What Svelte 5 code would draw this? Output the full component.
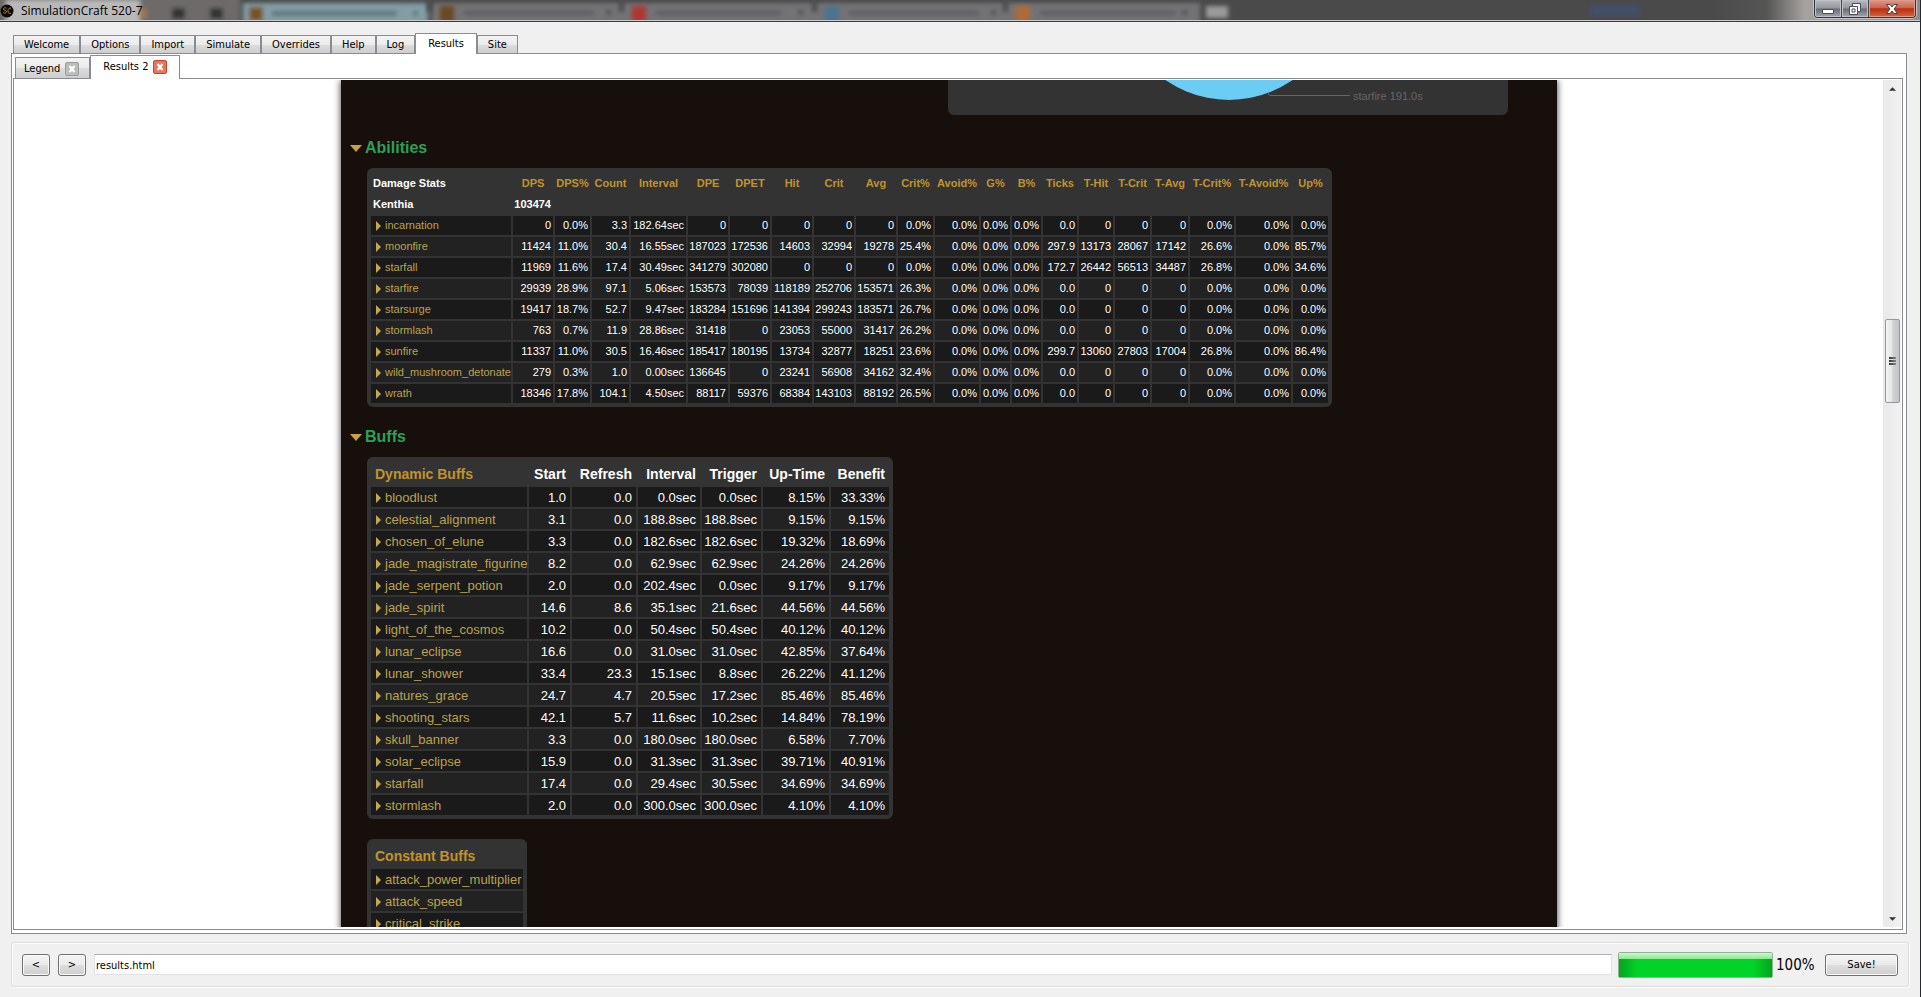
<script lang="ts">
    const tabs = ["Welcome", "Options", "Import", "Simulate", "Overrides", "Help", "Log", "Results", "Site"];
    const reports = ["Legend", "Results 2"];

    let activeTab = $state("Results");
    let activeReport = $state("Results 2");
    let address = $state("results.html");
    let progress = $state(100);

    const ghostTabs = [
        { x: 430, icon: "#6b4a22", text: 130 },
        { x: 622, icon: "#b03430", text: 125 },
        { x: 815, icon: "#4a7390", text: 130 },
        { x: 1006, icon: "#b06a34", text: 135 },
    ];

    const abilityCols: [string, number][] = [
        ["DPS", 40],
        ["DPS%", 35],
        ["Count", 37],
        ["Interval", 55],
        ["DPE", 40],
        ["DPET", 40],
        ["Hit", 40],
        ["Crit", 40],
        ["Avg", 40],
        ["Crit%", 35],
        ["Avoid%", 44],
        ["G%", 29],
        ["B%", 29],
        ["Ticks", 34],
        ["T-Hit", 34],
        ["T-Crit", 35],
        ["T-Avg", 36],
        ["T-Crit%", 44],
        ["T-Avoid%", 55],
        ["Up%", 35],
    ];

    const abilities = [
        "incarnation 0 0.0% 3.3 182.64sec 0 0 0 0 0 0.0% 0.0% 0.0% 0.0% 0.0 0 0 0 0.0% 0.0% 0.0%",
        "moonfire 11424 11.0% 30.4 16.55sec 187023 172536 14603 32994 19278 25.4% 0.0% 0.0% 0.0% 297.9 13173 28067 17142 26.6% 0.0% 85.7%",
        "starfall 11969 11.6% 17.4 30.49sec 341279 302080 0 0 0 0.0% 0.0% 0.0% 0.0% 172.7 26442 56513 34487 26.8% 0.0% 34.6%",
        "starfire 29939 28.9% 97.1 5.06sec 153573 78039 118189 252706 153571 26.3% 0.0% 0.0% 0.0% 0.0 0 0 0 0.0% 0.0% 0.0%",
        "starsurge 19417 18.7% 52.7 9.47sec 183284 151696 141394 299243 183571 26.7% 0.0% 0.0% 0.0% 0.0 0 0 0 0.0% 0.0% 0.0%",
        "stormlash 763 0.7% 11.9 28.86sec 31418 0 23053 55000 31417 26.2% 0.0% 0.0% 0.0% 0.0 0 0 0 0.0% 0.0% 0.0%",
        "sunfire 11337 11.0% 30.5 16.46sec 185417 180195 13734 32877 18251 23.6% 0.0% 0.0% 0.0% 299.7 13060 27803 17004 26.8% 0.0% 86.4%",
        "wild_mushroom_detonate 279 0.3% 1.0 0.00sec 136645 0 23241 56908 34162 32.4% 0.0% 0.0% 0.0% 0.0 0 0 0 0.0% 0.0% 0.0%",
        "wrath 18346 17.8% 104.1 4.50sec 88117 59376 68384 143103 88192 26.5% 0.0% 0.0% 0.0% 0.0 0 0 0 0.0% 0.0% 0.0%",
    ].map((row) => row.split(" "));

    const buffCols: [string, number][] = [
        ["Start", 41],
        ["Refresh", 64],
        ["Interval", 62],
        ["Trigger", 59],
        ["Up-Time", 66],
        ["Benefit", 58],
    ];

    const buffs = [
        "bloodlust 1.0 0.0 0.0sec 0.0sec 8.15% 33.33%",
        "celestial_alignment 3.1 0.0 188.8sec 188.8sec 9.15% 9.15%",
        "chosen_of_elune 3.3 0.0 182.6sec 182.6sec 19.32% 18.69%",
        "jade_magistrate_figurine 8.2 0.0 62.9sec 62.9sec 24.26% 24.26%",
        "jade_serpent_potion 2.0 0.0 202.4sec 0.0sec 9.17% 9.17%",
        "jade_spirit 14.6 8.6 35.1sec 21.6sec 44.56% 44.56%",
        "light_of_the_cosmos 10.2 0.0 50.4sec 50.4sec 40.12% 40.12%",
        "lunar_eclipse 16.6 0.0 31.0sec 31.0sec 42.85% 37.64%",
        "lunar_shower 33.4 23.3 15.1sec 8.8sec 26.22% 41.12%",
        "natures_grace 24.7 4.7 20.5sec 17.2sec 85.46% 85.46%",
        "shooting_stars 42.1 5.7 11.6sec 10.2sec 14.84% 78.19%",
        "skull_banner 3.3 0.0 180.0sec 180.0sec 6.58% 7.70%",
        "solar_eclipse 15.9 0.0 31.3sec 31.3sec 39.71% 40.91%",
        "starfall 17.4 0.0 29.4sec 30.5sec 34.69% 34.69%",
        "stormlash 2.0 0.0 300.0sec 300.0sec 4.10% 4.10%",
    ].map((row) => row.split(" "));

    const constantBuffs = ["attack_power_multiplier", "attack_speed", "critical_strike"];
</script>

<div class="window">
    <header class="titlebar">
        <svg class="glass" aria-hidden="true">
            <defs>
                <filter id="soft" x="-20%" y="-50%" width="140%" height="200%">
                    <feGaussianBlur stdDeviation="2" />
                </filter>
            </defs>
            <g filter="url(#soft)">
                <rect x="-10" y="-4" width="250" height="32" fill="#6d6b69" />
                <rect x="243" y="3" width="185" height="26" fill="#829da4" />
                <rect x="432" y="3" width="768" height="26" fill="#737376" />
                <rect x="6" y="0" width="134" height="26" fill="#b9b9b9" />
                <rect x="139" y="8" width="8" height="11" fill="#9a7452" />
                <rect x="172" y="8" width="13" height="11" fill="#363636" />
                <rect x="210" y="8" width="13" height="11" fill="#363636" />
                <rect x="249" y="7" width="14" height="14" fill="#7a5420" />
                <rect x="272" y="11" width="125" height="5" fill="#5d757d" />
                <rect x="413" y="11" width="5" height="5" fill="#5d757d" />
                <rect x="1206" y="6" width="22" height="12" fill="#9a9a9a" />
                <rect x="1590" y="5" width="50" height="11" fill="#434f68" />
            </g>
            {#each ghostTabs as tab}
                <g filter="url(#soft)">
                    <rect x={tab.x - 3} y="0" width="5" height="12" fill="#4b4b4b" />
                    <rect x={tab.x + 10} y="6" width="14" height="16" fill={tab.icon} />
                    <rect x={tab.x + 34} y="11" width={tab.text} height="4" fill="#5d5d60" />
                    <rect x={tab.x + 176} y="10" width="5" height="5" fill="#555558" />
                </g>
            {/each}
        </svg>
        <svg class="logo" viewBox="0 0 14 14" aria-hidden="true">
            <circle cx="7" cy="7" r="6.5" fill="#0d0b07" />
            <path d="M6.5 4.2c-1.4-.8-3.3-.2-3 1.2.3 1.2 2.7.8 2.9 2.2.1 1.4-1.9 1.9-3.2 1.1M11 4.2c-1.7-.6-3.1.9-3.1 2.7 0 1.9 1.4 3.1 3 2.5" fill="none" stroke="#b09430" />
        </svg>
        <span class="title">SimulationCraft 520-7</span>
        <div class="controls">
            <button aria-label="Minimize">
                <svg viewBox="0 0 12 12"><rect x=".5" y="6.5" width="11" height="4" rx=".5" fill="#fff" stroke="#484c5c" /></svg>
            </button>
            <button aria-label="Restore">
                <svg viewBox="0 0 12 12">
                    <path d="M3.5.5h8v8h-3v3h-8v-8h3z" fill="#fff" stroke="#484c5c" />
                    <path d="M3.5 3.5h5v5M3 6h3v3H3z" fill="none" stroke="#484c5c" />
                </svg>
            </button>
            <button class="close" aria-label="Close">
                <svg viewBox="0 0 12 12"><path d="M.5 1.5H4L6 4l2-2.5h3.5L8 6l3.5 4.500H8L6 8l-2 2.500H.5L4 6z" fill="#fff" stroke="#4c3c44" /></svg>
            </button>
        </div>
    </header>

    <main>
        <div class="tabs" role="tablist">
            {#each tabs as tab}
                <button class="tab" role="tab" class:active={tab === activeTab} aria-selected={tab === activeTab} onclick={() => (activeTab = tab)}>
                    {tab}
                </button>
            {/each}
        </div>

        <div class="pane">
            <div class="tabs reports" role="tablist">
                {#each reports as report}
                    <button class="tab" role="tab" class:active={report === activeReport} aria-selected={report === activeReport} onclick={() => (activeReport = report)}>
                        {report}
                        <svg class="tab-close" viewBox="0 0 14 14" aria-hidden="true">
                            <rect class="plate" x=".5" y=".5" width="13" height="13" rx="1.5" />
                            <path d="M4.5 4l5 6M9.5 4l-5 6" stroke="#fff" stroke-width="2.2" />
                        </svg>
                    </button>
                {/each}
            </div>

            <div class="view">
                <div class="scroller">
                    <article>
                        <svg class="chart" viewBox="0 0 560 35">
                            <circle cx="281" cy="-91" r="111" fill="#6bcdf3" />
                            <path d="M320 13q0 2.5 3 2.5h79" fill="none" stroke="#666" />
                            <text x="405" y="20">starfire 191.0s</text>
                        </svg>

                        <h3><a href="#abilities">Abilities</a></h3>
                        <table class="stats" id="abilities">
                            <colgroup>
                                <col style:width="140px" />
                                {#each abilityCols as [, width]}
                                    <col style:width="{width}px" />
                                {/each}
                            </colgroup>
                            <thead>
                                <tr>
                                    <th class="name">Damage Stats</th>
                                    {#each abilityCols as [label]}
                                        <th><a href="#help-{label}">{label}</a></th>
                                    {/each}
                                </tr>
                                <tr>
                                    <th class="name">Kenthia</th>
                                    <th class="total">103474</th>
                                    <td colspan="19"></td>
                                </tr>
                            </thead>
                            <tbody>
                                {#each abilities as [name, ...values]}
                                    <tr>
                                        <td class="name"><a class="toggle" href="#{name}">{name}</a></td>
                                        {#each values as value}
                                            <td>{value}</td>
                                        {/each}
                                    </tr>
                                {/each}
                            </tbody>
                        </table>

                        <h3><a href="#buffs">Buffs</a></h3>
                        <table class="buffs" id="buffs">
                            <colgroup>
                                <col style:width="156px" />
                                {#each buffCols as [, width]}
                                    <col style:width="{width}px" />
                                {/each}
                            </colgroup>
                            <thead>
                                <tr>
                                    <th class="name"><a href="#help-dynamic">Dynamic Buffs</a></th>
                                    {#each buffCols as [label]}
                                        <th>{label}</th>
                                    {/each}
                                </tr>
                            </thead>
                            <tbody>
                                {#each buffs as [name, ...values]}
                                    <tr>
                                        <td class="name"><a class="toggle" href="#buff-{name}">{name}</a></td>
                                        {#each values as value}
                                            <td>{value}</td>
                                        {/each}
                                    </tr>
                                {/each}
                            </tbody>
                        </table>

                        <table class="buffs constant">
                            <colgroup><col style:width="152px" /></colgroup>
                            <thead>
                                <tr><th class="name"><a href="#help-constant">Constant Buffs</a></th></tr>
                            </thead>
                            <tbody>
                                {#each constantBuffs as name}
                                    <tr><td class="name"><a class="toggle" href="#buff-{name}">{name}</a></td></tr>
                                {/each}
                            </tbody>
                        </table>
                    </article>
                </div>
                <div class="scrollbar">
                    <button class="arrow" aria-label="Scroll up">
                        <svg viewBox="0 0 8 4"><path d="M0 4l4-4 4 4z" fill="#333" /></svg>
                    </button>
                    <div class="before"></div>
                    <div class="thumb"><i></i><i></i><i></i></div>
                    <div class="after"></div>
                    <button class="arrow" aria-label="Scroll down">
                        <svg viewBox="0 0 8 4"><path d="M0 0l4 4 4-4z" fill="#333" /></svg>
                    </button>
                </div>
            </div>
        </div>
    </main>

    <footer>
        <button class="push nav" aria-label="Back">&lt;</button>
        <button class="push nav" aria-label="Forward">&gt;</button>
        <input type="text" aria-label="Address" bind:value={address} />
        <div class="progress" role="progressbar" aria-label="Simulation progress" aria-valuenow={progress}>
            <div class="fill" style:width="{progress}%"></div>
        </div>
        <span class="percent">{progress}%</span>
        <button class="push save">Save!</button>
    </footer>
</div>

<style>
    :global(body) {
        margin: 0;
        background: #f0f0f0;
    }

    .window {
        display: flex;
        flex-direction: column;
        box-sizing: border-box;
        height: 100vh;
        overflow: hidden;
        background: #f0f0f0;
        border-right: 1px solid #25282e;
        font: 11px/14px "DejaVu Sans Condensed", "DejaVu Sans", sans-serif;
        color: #000;
    }

    button {
        font: inherit;
        color: inherit;
        padding: 0;
        border: none;
        background: none;
    }

    .titlebar {
        position: relative;
        display: flex;
        align-items: center;
        box-sizing: border-box;
        height: 22px;
        flex: none;
        padding: 0 4px 0 0;
        background: linear-gradient(to right, #4a4a4a 89%, #555 92%, #a5a29f 94%, #8d8d8d);
        border-bottom: 1px solid #3d3d40;
        box-shadow: inset 0 -1px #c9c9cb;
    }

    .glass {
        position: absolute;
        inset: 0;
        width: 100%;
        height: 20px;
    }

    .logo {
        position: relative;
        width: 14px;
        height: 14px;
    }

    .title {
        position: relative;
        margin-left: 7px;
        font: 12px/20px "Open Sans", sans-serif;
    }

    .controls {
        position: relative;
        display: flex;
        align-self: flex-start;
        margin-left: auto;
        border: 1px solid #33343a;
        border-top: none;
        border-radius: 0 0 4px 4px;
        overflow: hidden;
        box-shadow: 0 0 0 1px #c3c3c6;
    }

    .controls button {
        display: flex;
        align-items: center;
        justify-content: center;
        width: 27px;
        height: 17px;
        border-right: 1px solid #44464e;
        background: linear-gradient(#b9bac0, #94969e 48%, #696c76 52%, #a2a5ad);
        box-shadow: inset 0 0 0 1px #c0c1c6;
    }

    .controls .close {
        width: 46px;
        border-right: none;
        background: linear-gradient(#dd9a8a, #cc6450 45%, #b5300f 52%, #d86440);
        box-shadow: inset 0 0 0 1px #dc9c8c;
    }

    .controls svg {
        width: 12px;
        height: 12px;
    }

    main {
        display: flex;
        flex-direction: column;
        flex: 1;
        min-height: 0;
        margin: 11px 13px 0 11px;
    }

    .tabs {
        display: flex;
        align-items: flex-end;
        flex: none;
        padding-left: 2px;
    }

    .tab {
        box-sizing: border-box;
        height: 18px;
        padding: 1px 10px 0;
        background: linear-gradient(#f3f3f3, #ebebeb 50%, #dcdcdc 52%, #cecece);
        border: 1px solid #898c95;
        border-bottom: none;
    }

    .tab.active {
        position: relative;
        height: 21px;
        margin-bottom: -1px;
        padding: 0 12px 1px;
        background: #fff;
    }

    .pane {
        display: flex;
        flex-direction: column;
        flex: 1;
        min-height: 0;
        padding: 1px 3px 3px 1px;
        border: 1px solid #898c95;
        background: #fff;
    }

    .reports .tab {
        display: flex;
        align-items: center;
        gap: 5px;
        height: 21px;
        padding: 1px 10px 0 8px;
    }

    .reports .tab.active {
        height: 24px;
        padding: 0 12px 1px;
    }

    .tab-close {
        width: 14px;
        height: 14px;
    }

    .plate {
        fill: #bcbcbc;
        stroke: #9b9b9b;
    }

    .active .plate {
        fill: #e8775a;
        stroke: #c8452a;
    }

    .view {
        display: flex;
        flex: 1;
        min-height: 0;
        padding: 1px 1px 2px;
        border: 1px solid #898c95;
    }

    .scroller {
        flex: 1;
        overflow: hidden;
    }

    article {
        box-sizing: border-box;
        width: 1216px;
        max-width: 100%;
        min-height: 100%;
        margin: 0 auto;
        padding: 0 49px 0 26px;
        background: #160f0b;
        box-shadow: 0 0 7px rgba(0, 0, 0, 0.8);
        font-family: "Liberation Sans", Arial, sans-serif;
        color: #fff;
    }

    .chart {
        display: block;
        width: 560px;
        height: 35px;
        margin-left: auto;
        background: #333;
        border-radius: 0 0 6px 6px;
    }

    .chart text {
        font-size: 11px;
        fill: #666;
    }

    article a {
        color: #c1932a;
        text-decoration: none;
    }

    h3 {
        margin: 20px 0 10px -17px;
        font-size: 16px;
        line-height: 20px;
    }

    .chart + h3 {
        margin-top: 23px;
    }

    h3 a {
        display: flex;
        align-items: center;
        gap: 3px;
        color: #2f9e56;
    }

    h3 a::before {
        content: "";
        border: 6px solid transparent;
        border-top: 7px solid #c8a040;
        border-bottom: none;
    }

    table {
        table-layout: fixed;
        width: 0;
        padding: 2px;
        border-collapse: separate;
        border-spacing: 2px;
        background: #333;
        border-radius: 6px;
    }

    th,
    td {
        padding: 0;
        text-align: right;
        white-space: nowrap;
    }

    .name {
        padding-left: 5px;
        text-align: left;
    }

    th.name {
        padding-left: 2px;
    }

    tbody tr:nth-child(odd) td {
        background: #1a1a1a;
    }

    tbody tr:nth-child(even) td {
        background: #222;
    }

    .toggle {
        display: flex;
        align-items: center;
        gap: 4px;
        color: #bba24a;
    }

    .toggle::before {
        content: "";
        border: 5px solid transparent;
        border-left-color: #c4a850;
        border-right: none;
    }

    .stats {
        font-size: 11px;
        line-height: 19px;
    }

    .stats th {
        text-align: center;
    }

    .stats tr:first-child th {
        padding-top: 2px;
    }

    .stats th.name {
        text-align: left;
    }

    .stats th.total,
    .stats td:not(.name) {
        padding-right: 2px;
        text-align: right;
    }

    .buffs {
        font-size: 13px;
        line-height: 18px;
    }

    .buffs th {
        padding-top: 2px;
        font-size: 14px;
        line-height: 22px;
    }

    .buffs td {
        padding-top: 2px;
    }

    .buffs th.name {
        padding-left: 4px;
    }

    .buffs th:not(.name),
    .buffs td:not(.name) {
        padding-right: 4px;
    }

    .constant {
        margin-top: 20px;
    }

    .scrollbar {
        display: flex;
        flex-direction: column;
        align-items: center;
        width: 18px;
        background: linear-gradient(to right, #e8e8e8, #f2f2f2);
    }

    .arrow {
        display: flex;
        align-items: center;
        justify-content: center;
        width: 17px;
        height: 17px;
    }

    .arrow svg {
        width: 7px;
        height: 4px;
    }

    .before {
        flex: 222;
    }

    .after {
        flex: 507;
    }

    .thumb {
        display: flex;
        flex-direction: column;
        align-items: center;
        justify-content: center;
        gap: 1px;
        box-sizing: border-box;
        width: 15px;
        height: 84px;
        background: linear-gradient(to right, #f5f5f5, #e4e4e6 45%, #cfd0d3 55%, #c4c4c8);
        border: 1px solid #96979b;
        border-radius: 2px;
    }

    .thumb i {
        width: 7px;
        height: 2px;
        background: linear-gradient(to right, #333, #888);
    }

    footer {
        display: flex;
        align-items: center;
        box-sizing: border-box;
        flex: none;
        height: 45px;
        margin: 8px 11px 10px 11px;
        padding: 0 10px;
        border: 1px solid #dcdcdc;
        border-radius: 3px;
        box-shadow: inset 1px 1px #fff, 1px 1px #fff;
    }

    .push {
        box-sizing: border-box;
        height: 22px;
        background: linear-gradient(#f3f3f3, #ebebeb 48%, #dddddd 52%, #cfcfcf);
        border: 1px solid #707070;
        border-radius: 3px;
        box-shadow: inset 0 0 0 1px #fafafa;
    }

    .nav {
        width: 28px;
        margin-right: 8px;
    }

    input {
        box-sizing: border-box;
        flex: 1;
        min-width: 0;
        height: 21px;
        padding: 1px 1px 0;
        font: inherit;
        background: #fff;
        border: 1px solid #e2e3ea;
        border-top-color: #abadb3;
    }

    .progress {
        box-sizing: border-box;
        width: 155px;
        height: 26px;
        margin: 0 3px 0 6px;
        border: 1px solid #8fb393;
        border-radius: 2px;
        background: #e6e6e6;
    }

    .fill {
        height: 100%;
        background:
            linear-gradient(#cdf7cd, #8ceb90 24%, transparent 25%),
            linear-gradient(to right, #04a41e, #02d328 12%, #02d328 88%, #04a41e);
    }

    .percent {
        width: 49px;
        font: 15px/20px "DejaVu Sans Condensed", "DejaVu Sans", sans-serif;
    }

    .save {
        width: 73px;
    }
</style>
